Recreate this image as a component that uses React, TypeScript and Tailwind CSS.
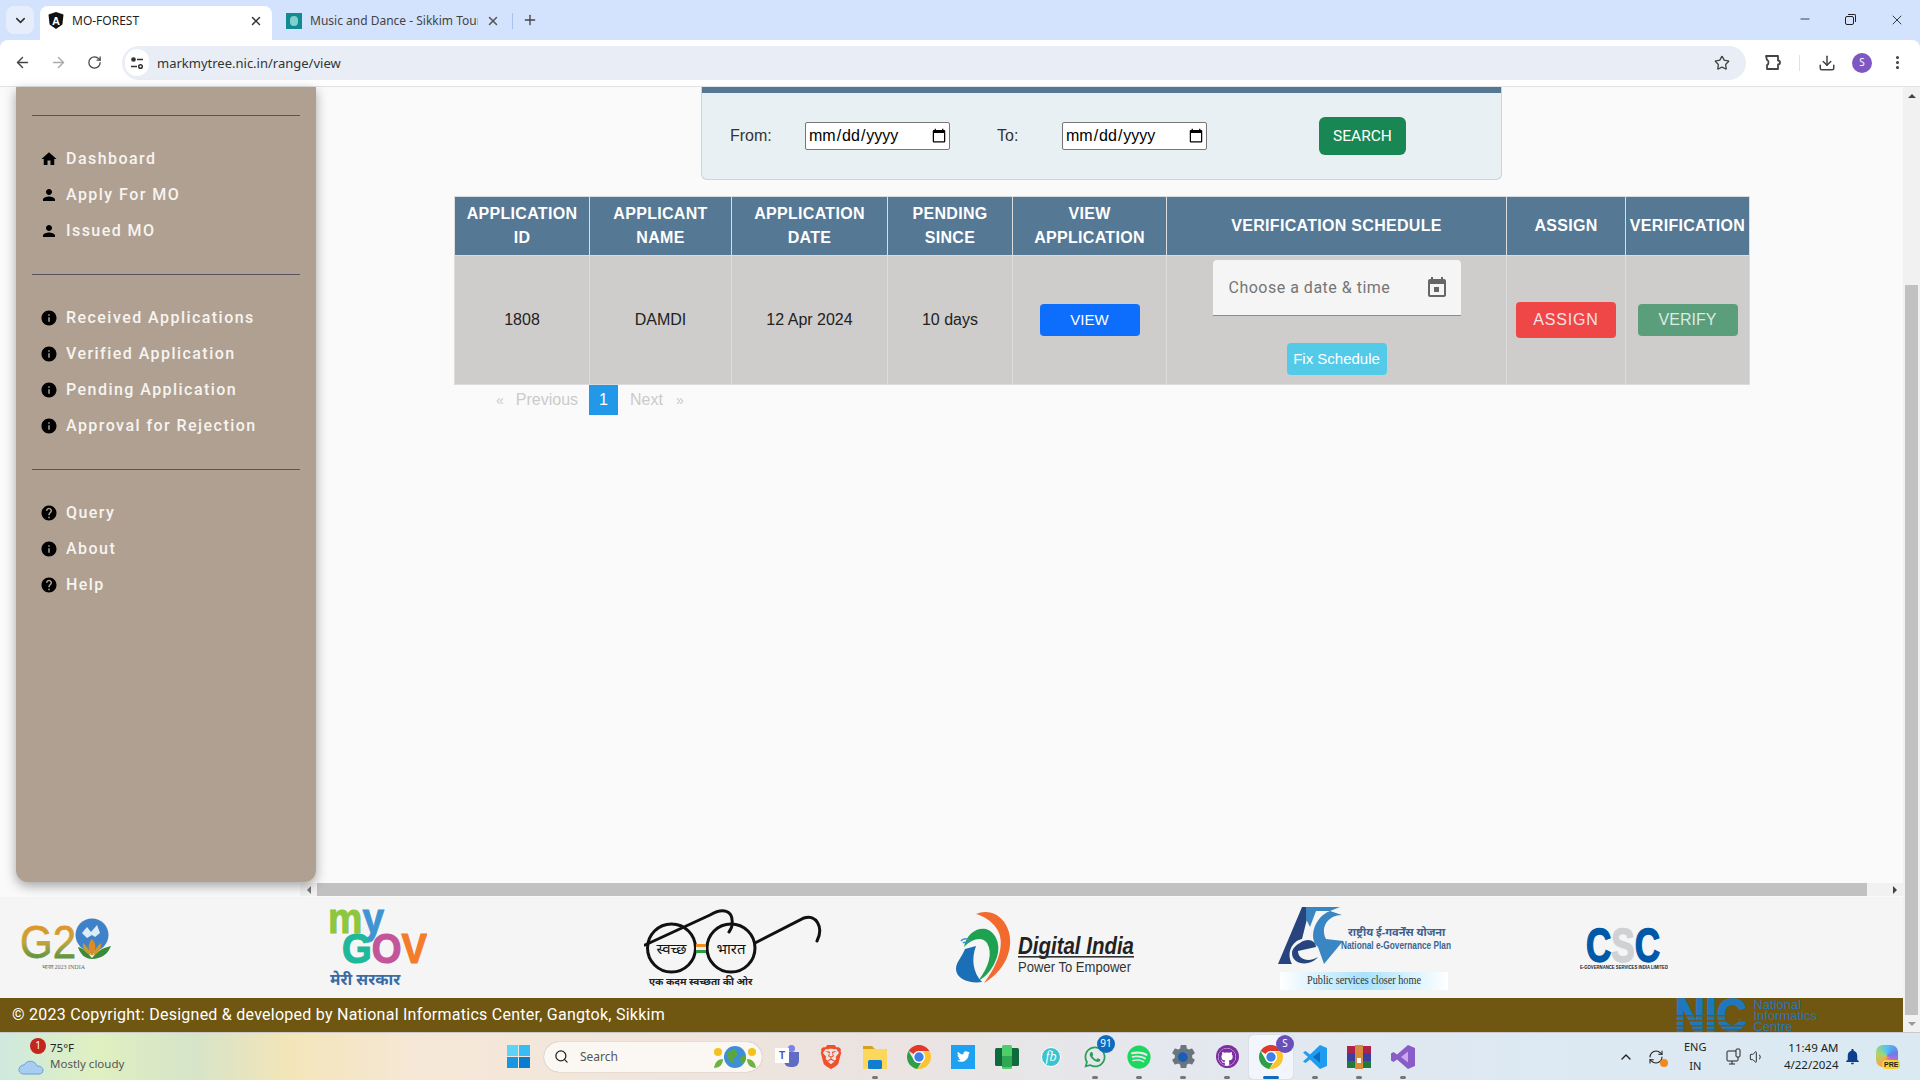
import type { ReactNode } from 'react';
import {
  ArrowLeft,
  ArrowRight,
  ChevronDown,
  ChevronUp,
  Download,
  EllipsisVertical,
  Minus,
  Plus,
  RefreshCw,
  RotateCw,
  Search,
  Star,
  Volume1,
  X,
} from 'lucide-react';
import { FaGithub, FaSpotify, FaTwitter, FaWhatsapp } from 'react-icons/fa';
import { MdHelp, MdHome, MdInfo, MdNotifications, MdPerson, MdSettings } from 'react-icons/md';
import { SiBrave } from 'react-icons/si';

const NAV_GROUPS = [
  [
    { label: 'Dashboard', icon: MdHome },
    { label: 'Apply For MO', icon: MdPerson },
    { label: 'Issued MO', icon: MdPerson },
  ],
  [
    { label: 'Received Applications', icon: MdInfo },
    { label: 'Verified Application', icon: MdInfo },
    { label: 'Pending Application', icon: MdInfo },
    { label: 'Approval for Rejection', icon: MdInfo },
  ],
  [
    { label: 'Query', icon: MdHelp },
    { label: 'About', icon: MdInfo },
    { label: 'Help', icon: MdHelp },
  ],
];

function ChromeLogo({ size = 24 }: { size?: number }) {
  return (
    <svg width={size} height={size} viewBox="0 0 24 24">
      <path fill="#e0392c" d="M12 0C16.4 0 20.3 2.4 22.4 6H12C9.8 6 7.9 7.2 6.8 9L1.6 6C3.7 2.4 7.6 0 12 0Z" />
      <path fill="#2f9e48" d="M1.6 6L6.8 15C7.8 16.8 9.8 18 12 18C12.8 18 13.4 17.9 14 17.7L10.3 23.9C4.5 23.1 0 18 0 12C0 9.8 .6 7.8 1.6 6Z" />
      <path fill="#fbc52d" d="M22.4 6C23.4 7.8 24 9.8 24 12C24 18.6 18.6 24 12 24C11.4 24 10.9 24 10.3 23.9L17.2 15C17.7 14 18 13 18 12C18 10 17 7.9 15.6 7Z" />
      <circle cx="12" cy="12" r="6" fill="#fff" />
      <circle cx="12" cy="12" r="4.7" fill="#3f7fe8" />
    </svg>
  );
}

function TabStrip() {
  return (
    <div className="flex h-10 shrink-0 items-end bg-[#d3e3fd] pl-1.5 font-['Noto_Sans',sans-serif] text-xs">
      <div className="mb-1.5 flex h-7 w-7 items-center justify-center rounded-lg bg-[#e6eefc]">
        <ChevronDown size={15} strokeWidth={2.5} className="text-[#333]" />
      </div>
      <div className="ml-1.5 flex h-[34px] w-[232px] items-center rounded-t-lg bg-white pb-[5px] pl-2 pr-[9px] text-[#1f1f1f]">
        <svg width="16" height="17" viewBox="0 0 16 17" className="shrink-0">
          <path fill="#111" d="M8 0L15.5 2.6L14.4 12.6L8 17L1.6 12.6L.5 2.6Z" />
          <text x="8" y="12.5" textAnchor="middle" fontSize="11" fontWeight="700" fill="#fff" fontFamily="Liberation Sans">A</text>
        </svg>
        <span className="ml-2 flex-1">MO-FOREST</span>
        <X size={14} strokeWidth={2.5} className="text-[#333]" />
      </div>
      <div className="flex h-[34px] w-[240px] items-center pb-[5px] pl-[14px] text-[#444]">
        <div className="flex h-4 w-4 shrink-0 items-center justify-center bg-[#128a94]">
          <div className="h-2.5 w-2 rounded-full bg-[#7fd0cc]" />
        </div>
        <span className="ml-2 w-[168px] overflow-hidden whitespace-nowrap">Music and Dance - Sikkim Tourism</span>
        <X size={14} strokeWidth={2.5} className="ml-2 text-[#555]" />
      </div>
      <div className="mb-[11px] h-4 w-px bg-[#a8c2ee]" />
      <Plus size={16} strokeWidth={2} className="mb-[12px] ml-[9px] text-[#444]" />
      <div className="mb-[12px] ml-auto flex text-[#222]">
        <div className="flex w-[46px] justify-center"><Minus size={14} strokeWidth={1.4} /></div>
        <div className="flex w-[46px] items-center justify-center">
          <div className="relative -ml-1 h-[9px] w-[9px] rounded-[2px] border border-[#222] bg-[#d3e3fd]">
            <div className="absolute -right-[3px] -top-[3px] h-[8px] w-[8px] rounded-tr-[2px] border-r border-t border-[#222]" />
          </div>
        </div>
        <div className="flex w-[46px] justify-center"><X size={16} strokeWidth={1.3} /></div>
      </div>
    </div>
  );
}

function Toolbar() {
  return (
    <div className="flex h-[47px] shrink-0 items-center rounded-t-lg border-b border-[#e3e3e3] bg-white pb-px font-['Noto_Sans',sans-serif] text-[#474747]">
      <div className="flex w-[122px] items-center pl-3.5 text-[#444]">
        <ArrowLeft size={17} strokeWidth={2} />
        <ArrowRight size={17} strokeWidth={2} className="ml-[19px] text-[#aaa]" />
        <RotateCw size={15} strokeWidth={2} className="ml-5" />
      </div>
      <div className="flex h-[34px] w-[1624px] items-center rounded-full bg-[#e9eef6] pl-[3px] pr-4">
        <div className="flex h-[27px] w-[24px] items-center justify-center rounded-full bg-white">
          <svg width="14" height="14" viewBox="0 0 14 14" fill="none" stroke="#333" strokeWidth="1.5">
            <circle cx="3.5" cy="3.5" r="1.6" fill="#333" />
            <path d="M7 3.500H13M1 10.500H7" />
            <circle cx="10.500" cy="10.500" r="1.8" />
          </svg>
        </div>
        <span className="ml-2 flex-1 pt-0.5 text-[13px] text-[#333]">markmytree.nic.in/range/view</span>
        <Star size={16} strokeWidth={2} className="text-[#444]" />
      </div>
      <svg width="17" height="17" viewBox="0 0 17 17" fill="none" stroke="#444" strokeWidth="1.8" strokeLinejoin="round" className="ml-[18px]">
        <path d="M2 2H14V6.500A2 2 0 0 1 14 10.500V15H3V11C5 10.500 5 6.500 3 6Z" />
      </svg>
      <div className="ml-[18px] h-4 w-px bg-[#d3e3fd]" />
      <Download size={18} strokeWidth={2} className="ml-[18px] text-[#444]" />
      <div className="ml-[16px] flex h-5 w-5 items-center justify-center rounded-full bg-[#7e57c2] text-[10px] text-white">S</div>
      <EllipsisVertical size={17} strokeWidth={2.4} className="ml-[17px] text-[#444]" />
    </div>
  );
}

function Sidebar() {
  return (
    <aside className="relative z-10 h-[795px] w-[300px] shrink-0 rounded-b-xl bg-[#afa091] px-4 pt-7 font-['Roboto',sans-serif] shadow-[0_4px_12px_rgba(0,0,0,0.35)]">
      {NAV_GROUPS.map((group, i) => (
        <div key={i} className="border-t border-[#55555f] pb-[25px] pt-[25px]">
          {group.map(({ label, icon: Icon }) => (
            <div key={label} className="flex h-9 items-center pl-2">
              <Icon size={18} className="shrink-0 text-black" />
              <span className="ml-2 text-base font-medium tracking-[1.45px] text-[#f7f4f0]">{label}</span>
            </div>
          ))}
        </div>
      ))}
    </aside>
  );
}

function SearchPanel() {
  return (
    <div className="ml-[385px] h-[93px] w-[801px] rounded-b-md border-x border-b border-[#cfd2d6] bg-[#e9f0f3] font-['Roboto',sans-serif] text-[#333]">
      <div className="h-1.5 bg-[#547893]" />
      <div className="flex items-center pt-6 text-base">
        <label className="ml-[28px] w-[75px] font-['Liberation_Sans',sans-serif]">From:</label>
        <input type="date" className="h-7 w-[145px] rounded-[2px] border border-[#767676] bg-white pl-0.5 font-['Liberation_Sans',sans-serif] text-black" />
        <label className="ml-[47px] w-[65px] font-['Liberation_Sans',sans-serif]">To:</label>
        <input type="date" className="h-7 w-[145px] rounded-[2px] border border-[#767676] bg-white pl-0.5 font-['Liberation_Sans',sans-serif] text-black" />
        <button className="ml-[112px] h-[38px] w-[87px] rounded-md bg-[#198754] pt-0.5 text-[15.5px] text-white">SEARCH</button>
      </div>
    </div>
  );
}

function AppTable() {
  const heads = [
    ['APPLICATION', 'ID'],
    ['APPLICANT', 'NAME'],
    ['APPLICATION', 'DATE'],
    ['PENDING', 'SINCE'],
    ['VIEW', 'APPLICATION'],
    ['VERIFICATION SCHEDULE'],
    ['ASSIGN'],
    ['VERIFICATION'],
  ];
  const widths = ['w-[135px]', 'w-[142px]', 'w-[156px]', 'w-[125px]', 'w-[154px]', 'w-[340px]', 'w-[119px]', 'w-[124px]'];
  const cell = 'border border-[#dcdcdc] text-center align-middle';
  return (
    <table className="ml-[138px] mt-4 w-[1295px] table-fixed border-collapse font-['Liberation_Sans',sans-serif] text-base">
      <thead>
        <tr className="h-[59px] bg-[#557895] text-white">
          {heads.map((lines, i) => (
            <th key={i} className={`${cell} ${widths[i]} font-bold leading-6 tracking-[0.3px]`}>
              {lines.map((l) => (
                <div key={l}>{l}</div>
              ))}
            </th>
          ))}
        </tr>
      </thead>
      <tbody>
        <tr className="h-[129px] bg-[#cecdcb] text-[#222]">
          <td className={cell}>1808</td>
          <td className={cell}>DAMDI</td>
          <td className={cell}>12 Apr 2024</td>
          <td className={cell}>10 days</td>
          <td className={cell}>
            <button className="h-8 w-[100px] rounded bg-[#0d6efd] text-[15px] text-white">VIEW</button>
          </td>
          <td className="border border-[#dcdcdc] pt-1 text-center align-top">
            <div className="mx-auto flex h-[56px] w-[248px] items-center justify-between rounded-t border-b border-[#8c8c8c] bg-[#f5f5f5] pl-4 pr-3 font-['Roboto',sans-serif] tracking-[0.5px] text-[#757575]">
              <span>Choose a date &amp; time</span>
              <svg width="24" height="24" viewBox="0 0 24 24" fill="#666">
                <path d="M19 3h-1V1h-2v2H8V1H6v2H5c-1.11 0-1.99.9-1.99 2L3 19c0 1.1.89 2 2 2h14c1.1 0 2-.9 2-2V5c0-1.1-.9-2-2-2zm0 16H5V8h14v11zM9 11h5v5H9z" />
              </svg>
            </div>
            <button className="mx-auto mt-[27px] block h-8 w-[100px] rounded bg-[#53cbe8] text-[15px] text-white">Fix Schedule</button>
          </td>
          <td className={cell}>
            <button className="h-9 w-[100px] rounded bg-[#ef4648] tracking-[0.8px] text-[#f3e3e3]">ASSIGN</button>
          </td>
          <td className={cell}>
            <button className="h-8 w-[100px] rounded bg-[#5a9e7c] text-[#dcebe2]">VERIFY</button>
          </td>
        </tr>
      </tbody>
    </table>
  );
}

function Pagination() {
  return (
    <div className="ml-[138px] flex h-[30px] items-center font-['Liberation_Sans',sans-serif] text-base text-[#cacaca]">
      <span className="ml-[42px] text-[14px]">«</span>
      <span className="ml-3">Previous</span>
      <div className="ml-[11px] flex h-[30px] w-[29px] items-center justify-center bg-[#2199e8] text-white">1</div>
      <span className="ml-3">Next</span>
      <span className="ml-[13px] text-[14px]">»</span>
    </div>
  );
}

function HScrollbar() {
  return (
    <div className="-ml-4 mb-px flex h-[13px] items-center bg-[#f1f1f1]">
      <div className="flex w-[17px] justify-center">
        <div className="h-0 w-0 border-y-4 border-r-4 border-y-transparent border-r-[#777]" />
      </div>
      <div className="h-[13px] w-[1550px] bg-[#c1c1c1]" />
      <div className="flex flex-1 justify-end pr-[6px]">
        <div className="h-0 w-0 border-y-4 border-l-4 border-y-transparent border-l-[#444]" />
      </div>
    </div>
  );
}

function VScrollbar() {
  return (
    <div className="flex w-[17px] shrink-0 flex-col items-center bg-[#f1f1f1]">
      <div className="mt-[7px] h-0 w-0 border-x-4 border-b-4 border-x-transparent border-b-[#444]" />
      <div className="mt-[187px] h-[730px] w-[13px] bg-[#c1c1c1]" />
      <div className="mt-[7px] h-0 w-0 border-x-4 border-t-4 border-x-transparent border-t-[#999]" />
    </div>
  );
}

function G20Logo() {
  return (
    <svg width="92" height="101" viewBox="0 0 92 101" className="ml-5 shrink-0">
      <defs>
        <linearGradient id="g20" x1="0" y1="0" x2="0" y2="1">
          <stop offset="0" stopColor="#f28c1e" />
          <stop offset="0.5" stopColor="#c2a53a" />
          <stop offset="1" stopColor="#1f8a4c" />
        </linearGradient>
      </defs>
      <text x="0" y="61" fontSize="46" fontFamily="Liberation Sans" fill="url(#g20)" stroke="url(#g20)" strokeWidth="0.8" textLength="56" lengthAdjust="spacingAndGlyphs">G2</text>
      <circle cx="72" cy="38" r="16.5" fill="#3f82c8" />
      <path fill="#dcecf8" d="M62 36l5-6 4 5 6-7 3 8-5 4-3-2-5 3z" />
      <path fill="#3b8a3c" d="M58 50c5 1 10 6 14 11c4-5 9-10 19-12c-3 8-10 13-19 13c-7 0-12-5-14-12z" />
      <path fill="#dd8a25" d="M72 42c4 4 5 10 0 17c-5-7-4-13 0-17z" />
      <path fill="#c79a2a" d="M63 46c3 2 6 6 8 12c-5-1-9-6-8-12zM81 46c-3 2-6 6-8 12c5-1 9-6 8-12z" />
      <text x="22" y="72" fontSize="6" fontFamily="Liberation Serif" fill="#666">भारत 2023 INDIA</text>
    </svg>
  );
}

function MyGovLogo() {
  return (
    <svg width="98" height="101" viewBox="0 0 98 101" className="ml-[217px] shrink-0">
      <text x="-1" y="36" fontSize="42" fontWeight="700" fontFamily="Liberation Sans" strokeWidth="1" textLength="56" lengthAdjust="spacingAndGlyphs">
        <tspan fill="#8dc63f" stroke="#8dc63f">m</tspan>
        <tspan fill="#3f94d4" stroke="#3f94d4">y</tspan>
      </text>
      <text x="13" y="66" fontSize="42" fontWeight="700" fontFamily="Liberation Sans" strokeWidth="1.2" textLength="85" lengthAdjust="spacingAndGlyphs">
        <tspan fill="#1fb89a" stroke="#1fb89a">G</tspan>
        <tspan fill="#c2569b" stroke="#c2569b">O</tspan>
        <tspan fill="#f47b2a" stroke="#f47b2a">V</tspan>
      </text>
      <text x="1" y="88" fontSize="16" fontWeight="700" fontFamily="Noto Sans, sans-serif" fill="#3a6ba5">मेरी सरकार</text>
    </svg>
  );
}

function SwachhLogo() {
  return (
    <svg width="180" height="101" viewBox="0 0 180 101" className="ml-[217px] shrink-0">
      <g fill="none" stroke="#111" strokeWidth="3">
        <circle cx="27.5" cy="51" r="24" />
        <circle cx="87" cy="51" r="24" />
        <path d="M1 48L66 18C78 11 90 12 88 28C88 31 86 33 85 35" strokeLinecap="round" />
        <path d="M111 46L160 21C172 17 180 30 173 44" strokeLinecap="round" />
      </g>
      <rect x="52" y="47" width="10" height="3" fill="#f28c1e" />
      <rect x="52" y="50" width="10" height="3" fill="#eee" />
      <rect x="52" y="53" width="10" height="3" fill="#2c9a47" />
      <text x="27.5" y="57" textAnchor="middle" fontSize="15" fontFamily="Noto Sans, sans-serif" fill="#111">स्वच्छ</text>
      <text x="87" y="57" textAnchor="middle" fontSize="15" fontFamily="Noto Sans, sans-serif" fill="#111">भारत</text>
      <text x="5" y="88" fontSize="10" fontWeight="700" fontFamily="Noto Sans, sans-serif" fill="#222">एक कदम स्वच्छता की ओर</text>
    </svg>
  );
}

function DigitalIndiaLogo() {
  return (
    <svg width="178" height="101" viewBox="0 0 178 101" className="ml-[132px] shrink-0">
      <path fill="#f26a2e" d="M20 17C30 12 44 16 50 28C60 46 52 72 28 86C42 68 50 46 41 32C35 23 27 19 20 17Z" />
      <path fill="#1ea24f" d="M8 50C10 38 20 30 30 32C40 35 45 48 41 60C37 72 30 80 22 84C33 70 37 56 31 46C26 39 16 42 8 50Z" />
      <path fill="#1b6fb7" d="M9 52L20 49C15 62 17 76 26 85C14 87 0 82 0 72C0 65 6 60 9 52Z" />
      <path fill="none" stroke="#3d8ecb" strokeWidth="1.5" d="M5 44C7 41 12 41 14 44M7 46C8 45 11 45 12 46" />
      <text x="62" y="57" fontSize="23" fontWeight="700" fontStyle="italic" fontFamily="Liberation Sans" fill="#222" textLength="116" lengthAdjust="spacingAndGlyphs">Digital India</text>
      <rect x="62" y="59" width="116" height="1.6" fill="#333" />
      <text x="62" y="75" fontSize="14" fontFamily="Liberation Sans" fill="#333" textLength="113" lengthAdjust="spacingAndGlyphs">Power To Empower</text>
    </svg>
  );
}

function NegpLogo() {
  return (
    <svg width="173" height="101" viewBox="0 0 173 101" className="ml-[144px] shrink-0">
      <defs>
        <linearGradient id="band" x1="0" y1="0" x2="1" y2="0">
          <stop offset="0" stopColor="#fff" />
          <stop offset="0.5" stopColor="#a9e2fb" />
          <stop offset="1" stopColor="#fff" />
        </linearGradient>
      </defs>
      <path fill="#27447f" d="M0 67L24 10H32L24 42C14 44 8 56 14 67Z" />
      <path fill="#3a86c2" d="M28 10H62L52 14H38L32 30L28 22Z" />
      <path fill="#3a86c2" d="M64 18C50 18 42 30 48 42L65 44L46 67L40 50C30 42 36 20 52 14Z" />
      <path fill="#27447f" d="M22 46C30 40 38 44 38 50L20 54C20 62 30 66 40 60C32 70 14 68 14 56C14 52 18 48 22 46Z" />
      <text x="70" y="39" fontSize="11" fontWeight="700" fontFamily="Noto Sans, sans-serif" fill="#3f5f90">राष्ट्रीय ई-गवर्नेंस योजना</text>
      <text x="63" y="52" fontSize="10" fontWeight="700" fontFamily="Liberation Sans" fill="#3a6596" textLength="110" lengthAdjust="spacingAndGlyphs">National e-Governance Plan</text>
      <rect x="2" y="75" width="168" height="18" fill="url(#band)" />
      <text x="86" y="87" textAnchor="middle" fontSize="12" fontFamily="Liberation Serif" fill="#333" textLength="114" lengthAdjust="spacingAndGlyphs">Public services closer home</text>
    </svg>
  );
}

function CscLogo() {
  return (
    <svg width="88" height="101" viewBox="0 0 88 101" className="ml-[129px] shrink-0">
      <text x="6" y="65" fontSize="48" fontWeight="700" fontFamily="Liberation Sans" strokeWidth="1.5" textLength="74" lengthAdjust="spacingAndGlyphs">
        <tspan fill="#0058a8" stroke="#0058a8">C</tspan>
        <tspan fill="#cfd1d3" stroke="#cfd1d3">S</tspan>
        <tspan fill="#0058a8" stroke="#0058a8">C</tspan>
      </text>
      <text x="0" y="72" fontSize="4.5" fontWeight="700" fontFamily="Liberation Sans" fill="#222" textLength="88" lengthAdjust="spacingAndGlyphs">E-GOVERNANCE SERVICES INDIA LIMITED</text>
    </svg>
  );
}

function NicLogo() {
  return (
    <div className="mr-[86px] flex h-[34px] items-start overflow-hidden text-[#1f78bd]">
      <svg width="72" height="34" viewBox="0 0 72 34">
        <text x="0" y="33" fontSize="46" fontWeight="700" fontFamily="Liberation Sans" fill="#1f78bd" stroke="#1f78bd" strokeWidth="1.5" textLength="72" lengthAdjust="spacingAndGlyphs">NIC</text>
        {[17, 22, 27, 31].map((y) => (
          <rect key={y} x="0" y={y} width="72" height="1.5" fill="#6f5611" />
        ))}
      </svg>
      <div className="ml-[6px] pt-px font-['Liberation_Sans',sans-serif] text-[13px] leading-[11px] tracking-normal">
        National
        <br />
        Informatics
        <br />
        Centre
      </div>
    </div>
  );
}

function Footer() {
  return (
    <footer className="shrink-0">
      <div className="flex h-[101px] bg-[#f5f5f5]">
        <G20Logo />
        <MyGovLogo />
        <SwachhLogo />
        <DigitalIndiaLogo />
        <NegpLogo />
        <CscLogo />
      </div>
      <div className="flex h-[34px] items-center justify-between bg-[#6f5611] pl-3 font-['Roboto',sans-serif] text-base tracking-[0.25px] text-white">
        <span>© 2023 Copyright: Designed &amp; developed by National Informatics Center, Gangtok, Sikkim</span>
        <NicLogo />
      </div>
    </footer>
  );
}

function TaskIcon({ children, running, active }: { children: ReactNode; running?: boolean; active?: boolean }) {
  return (
    <div className={`relative flex h-[44px] w-11 items-center justify-center rounded ${active ? 'bg-[#f2f5fb] shadow-[0_0_1px_rgba(0,0,0,0.3)]' : ''}`}>
      {children}
      {running && !active && <div className="absolute bottom-0 h-[3px] w-[6px] rounded-full bg-[#777]" />}
      {active && <div className="absolute bottom-0 h-[3px] w-4 rounded-full bg-[#0f6cbd]" />}
    </div>
  );
}

function Taskbar() {
  return (
    <div className="flex h-12 shrink-0 items-center border-t border-[#c9c9c9] bg-[linear-gradient(90deg,#cfe9df_0%,#dff0c0_5%,#d6e4c9_10%,#f3e5b8_15%,#f6e8d8_22%,#ebe3e0_45%,#e5e8ee_60%,#dde9f3_80%,#dbe9f3_100%)] font-['Noto_Sans',sans-serif] text-[#222]">
      {/* Weather */}
      <div className="relative ml-[18px] flex w-[478px] items-center">
        <svg width="26" height="20" viewBox="0 0 26 20" className="mt-4">
          <path fill="#a8cdf0" stroke="#6a9fd8" d="M6 19C2 19 .5 16 1 14C1.500 11 4 10 6 10C8 6 14 5 17 8C18 9 19 10 19 11C23 11 25 13 25 15C25 18 23 19 21 19Z" />
        </svg>
        <div className="absolute left-[12px] top-[-1px] flex h-4 w-4 items-center justify-center rounded-full bg-[#c4261d] text-[10px] text-white">1</div>
        <div className="ml-[6px] pb-0.5 text-[11.5px] leading-[16px]">
          <div>75°F</div>
          <div className="text-[#555]">Mostly cloudy</div>
        </div>
      </div>

      {/* Windows logo */}
      <div className="flex w-11 justify-center">
        <div className="grid h-[23px] w-[23px] grid-cols-2 gap-px">
          <div className="bg-[#5ed3f8]" />
          <div className="bg-[#37bdf4]" />
          <div className="bg-[#1797e2]" />
          <div className="bg-[#0a7cd0]" />
        </div>
      </div>

      <div className="ml-1 flex h-[30px] w-[218px] items-center rounded-full bg-[#fbf8f3] pl-2.5 pr-1 text-xs text-[#555] shadow-[0_0_1px_rgba(0,0,0,0.4)]">
        <Search size={15} strokeWidth={2} className="text-[#222]" />
        <span className="ml-[11px] flex-1">Search</span>
        <svg width="46" height="26" viewBox="0 0 46 26">
          <circle cx="23" cy="13" r="11" fill="#3f8fd8" />
          <path fill="#5aa83c" d="M16 8l7-3 3 6-5 3 2 6-5-3-3-5zM28 13l6-2-1 7-4 2z" />
          <circle cx="6" cy="8" r="4" fill="#f4c21f" />
          <circle cx="40" cy="8" r="4" fill="#f4c21f" />
          <path fill="#6fb340" d="M2 24c1-6 4-9 9-9c0 5-3 9-9 9zM44 24c-1-6-4-9-9-9c0 5 3 9 9 9z" />
        </svg>
      </div>

      <div className="ml-[3px] flex h-[44px] items-center">
        <TaskIcon>
          <div className="relative h-6 w-6">
            <div className="absolute right-0 top-[7px] h-[15px] w-[15px] rounded-b-md bg-[#5f6cc4]" />
            <div className="absolute right-[4px] top-0 h-[7px] w-[7px] rounded-full bg-[#7b83eb]" />
            <div className="absolute left-0 top-[3px] flex h-[15px] w-[14px] items-center justify-center bg-white font-['Liberation_Sans',sans-serif] text-[10px] font-bold text-[#4b53bc]">T</div>
          </div>
        </TaskIcon>
        <TaskIcon><SiBrave size={24} className="text-[#f1502c]" /></TaskIcon>
        <TaskIcon running>
          <svg width="24" height="24" viewBox="0 0 24 24">
            <path fill="#d6a21e" d="M0 1h9l3 3h12v6H0z" />
            <rect y="4" width="24" height="20" fill="#fbd75b" />
            <rect x="5" y="15" width="14" height="9" rx="1.500" fill="#0f7ed0" />
          </svg>
        </TaskIcon>
        <TaskIcon><ChromeLogo /></TaskIcon>
        <TaskIcon>
          <div className="flex h-6 w-6 items-center justify-center bg-[#1da1f2]">
            <FaTwitter size={13} className="text-white" />
          </div>
        </TaskIcon>
        <TaskIcon>
          <svg width="24" height="24" viewBox="0 0 24 24">
            <rect y="3" width="24" height="18" rx="1.500" fill="#0f6b3d" />
            <rect x="7" y="0" width="10" height="24" rx="1.500" fill="#4fce67" />
            <rect x="7" y="11" width="10" height="11" fill="#2ea855" />
          </svg>
        </TaskIcon>
        <TaskIcon>
          <div className="flex h-5 w-5 items-center justify-center rounded-full border border-white bg-[#3cc3cf] font-['Liberation_Serif',serif] text-sm italic text-white">fb</div>
        </TaskIcon>
        <TaskIcon running>
          <FaWhatsapp size={24} className="text-[#2ca05a]" />
          <div className="absolute right-[2px] top-0 flex h-[18px] w-[18px] items-center justify-center rounded-full bg-[#0f6cbd] text-[10px] text-white">91</div>
        </TaskIcon>
        <TaskIcon running><FaSpotify size={24} className="text-[#1ed760]" /></TaskIcon>
        <TaskIcon running>
          <div className="relative flex items-center justify-center">
            <MdSettings size={29} className="text-[#6b7580]" />
            <div className="absolute h-2.5 w-2.5 rounded-full bg-[#1a5fb4]" />
          </div>
        </TaskIcon>
        <TaskIcon running>
          <div className="flex h-[23px] w-[23px] items-center justify-center rounded-full bg-[#7b2fa0]">
            <FaGithub size={18} className="rounded-full bg-white text-[#7b2fa0]" />
          </div>
        </TaskIcon>
        <TaskIcon active>
          <ChromeLogo />
          <div className="absolute -right-px top-0 flex h-[18px] w-[18px] items-center justify-center rounded-full bg-[#6b4fb8] text-[10px] text-white">S</div>
        </TaskIcon>
        <TaskIcon running>
          <svg width="24" height="24" viewBox="0 0 24 24">
            <path fill="#1f9cf0" d="M17 0L24 3V21L17 24L7 14.500L2.500 18L0 16.500L5 12L0 7.500L2.500 6L7 9.500Z" />
            <path fill="#0b6fbf" d="M17 6.500L10 12L17 17.500Z" />
          </svg>
        </TaskIcon>
        <TaskIcon running>
          <svg width="24" height="24" viewBox="0 0 24 24">
            <rect y="1" width="24" height="7" fill="#b0224e" />
            <rect y="8" width="24" height="8" fill="#3d3f9f" />
            <rect y="16" width="24" height="7" fill="#1f7a3c" />
            <rect x="8" y="0" width="8" height="24" fill="#d98a3d" />
            <rect x="10" y="13" width="4" height="5" fill="#fff" />
          </svg>
        </TaskIcon>
        <TaskIcon running>
          <svg width="24" height="24" viewBox="0 0 24 24">
            <path fill="#8a5cc8" d="M17 0L24 3V21L17 24L6 14.500L2.500 17L0 15.500V8.500L2.500 7L6 9.500Z" />
            <path fill="#c9a6f0" d="M17 6.500L10 12L17 17.500Z" />
          </svg>
        </TaskIcon>
      </div>

      {/* System tray */}
      <div className="ml-[193px] flex items-center">
        <ChevronUp size={16} strokeWidth={2} />
        <div className="relative ml-[14px] h-4 w-4">
          <RefreshCw size={16} strokeWidth={1.6} />
          <div className="absolute -bottom-[2px] -right-[4px] h-2 w-2 rounded-full bg-[#f08a1d]" />
        </div>
        <div className="ml-5 pb-0.5 text-center text-[11px] leading-[19px]">
          <div>ENG</div>
          <div>IN</div>
        </div>
        <svg width="16" height="18" viewBox="0 0 16 18" fill="none" stroke="#222" className="ml-5">
          <rect x="1" y="3" width="11" height="10" rx="1" />
          <path d="M6 13v3M3 16h6" />
          <rect x="10" y="1" width="4" height="8" rx="1" fill="#e5e9ef" />
        </svg>
        <Volume1 size={16} strokeWidth={1.4} className="ml-[7px]" />
        <div className="ml-[5px] w-[68px] pb-0.5 text-right text-[11.5px] leading-[17px]">
          <div>11:49 AM</div>
          <div>4/22/2024</div>
        </div>
        <MdNotifications size={19} className="ml-[5px] text-[#0d3f8f]" />
        <div className="relative ml-[14px] h-6 w-6">
          <div className="h-[22px] w-[22px] rounded-[7px] bg-[conic-gradient(#4fc3f7,#6a7be8,#e26ac0,#f3a94b,#a5d86a,#4fc3f7)]" />
          <div className="absolute bottom-0 right-0 rounded-sm bg-[#f7d23a] px-0.5 font-['Liberation_Sans',sans-serif] text-[7px] font-bold leading-[9px] text-[#222]">PRE</div>
        </div>
      </div>
    </div>
  );
}

export default function App() {
  return (
    <div className="flex h-[1080px] w-[1920px] flex-col overflow-hidden bg-[#d3e3fd]">
      <TabStrip />
      <Toolbar />
      <div className="flex min-h-0 flex-1">
        <div className="flex min-w-0 flex-1 flex-col">
          <div className="flex min-h-0 flex-1 bg-[#fafafa] pl-4">
            <Sidebar />
            <div className="flex min-w-0 flex-1 flex-col">
              <main className="flex-1">
                <SearchPanel />
                <AppTable />
                <Pagination />
              </main>
              <HScrollbar />
            </div>
          </div>
          <Footer />
        </div>
        <VScrollbar />
      </div>
      <Taskbar />
    </div>
  );
}
